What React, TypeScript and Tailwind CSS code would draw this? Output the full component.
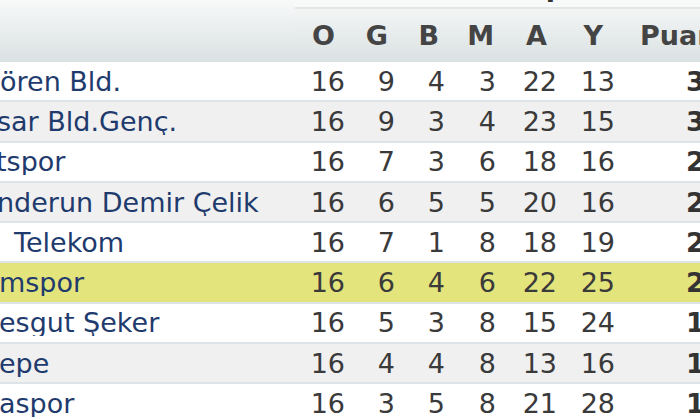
import React from 'react';

type Row = {
  name: string;
  indent: string;
  o: number;
  g: number;
  b: number;
  m: number;
  a: number;
  y: number;
  p: number;
  bg: string;
};

const rows: Row[] = [
  { name: 'ören Bld.', indent: 'ml-0', o: 16, g: 9, b: 4, m: 3, a: 22, y: 13, p: 31, bg: 'bg-white' },
  { name: 'sar Bld.Genç.', indent: '-ml-[3px]', o: 16, g: 9, b: 3, m: 4, a: 23, y: 15, p: 30, bg: 'bg-[#f0f0f0]' },
  { name: 'tspor', indent: '-ml-[4px]', o: 16, g: 7, b: 3, m: 6, a: 18, y: 16, p: 24, bg: 'bg-white' },
  { name: 'nderun Demir Çelik', indent: '-ml-[3px]', o: 16, g: 6, b: 5, m: 5, a: 20, y: 16, p: 23, bg: 'bg-[#f0f0f0]' },
  { name: 'Telekom', indent: 'ml-[14px]', o: 16, g: 7, b: 1, m: 8, a: 18, y: 19, p: 22, bg: 'bg-white' },
  { name: 'mspor', indent: '-ml-[1px]', o: 16, g: 6, b: 4, m: 6, a: 22, y: 25, p: 22, bg: 'bg-[#e4e47c]' },
  { name: 'esgut Şeker', indent: '-ml-[1px]', o: 16, g: 5, b: 3, m: 8, a: 15, y: 24, p: 18, bg: 'bg-white' },
  { name: 'epe', indent: '-ml-[1px]', o: 16, g: 4, b: 4, m: 8, a: 13, y: 16, p: 16, bg: 'bg-[#f0f0f0]' },
  { name: 'aspor', indent: '-ml-[1px]', o: 16, g: 3, b: 5, m: 8, a: 21, y: 28, p: 14, bg: 'bg-white' },
];

const font = 'font-["DejaVu_Sans",Verdana,sans-serif]';

export default function App() {
  return (
    <div className={`w-[700px] h-[420px] overflow-hidden bg-white text-[27px] ${font}`}>
      <div className="w-[900px]">
        {/* header */}
        <div className="flex h-[62px]">
          <div className="w-[295px] shrink-0 bg-gradient-to-b from-[#f8f9f9] to-[#dae1e2]" />
          <div className="flex-1 flex flex-col">
            <div className="h-[7px] shrink-0 overflow-hidden bg-[#f8f9f9] flex items-end pl-[196px]">
              <span className="leading-none font-bold text-[#333] mb-[7px]">Grup</span>
            </div>
            <div className="h-[2px] shrink-0 bg-[#e2e6e7]" />
            <div className="flex-1 flex items-center bg-gradient-to-b from-[#f3f5f5] to-[#dae1e2] font-bold text-[#444] leading-none">
              <div className="w-[50px] text-right pr-[10px]">O</div>
              <div className="w-[50px] text-right pr-[7px]">G</div>
              <div className="w-[50px] text-right pr-[6px]">B</div>
              <div className="w-[51px] text-right pr-[2px]">M</div>
              <div className="w-[61px] text-right pr-[10px]">A</div>
              <div className="w-[58px] text-right pr-[12px]">Y</div>
              <div className="pl-[25px]">Puan</div>
            </div>
          </div>
        </div>

        {/* rows */}
        {rows.map((r, i) => (
          <div key={i} className={`flex items-center h-[40.3px] border-b-2 border-[#dde3e6] ${r.bg} text-[#3a3a3a] leading-none`}>
            <div className="w-[295px] shrink-0 overflow-hidden whitespace-nowrap">
              <span className={`inline-block text-[#1f3b6d] ${r.indent}`}>{r.name}</span>
            </div>
            <div className="w-[50px] text-right">{r.o}</div>
            <div className="w-[50px] text-right">{r.g}</div>
            <div className="w-[50px] text-right">{r.b}</div>
            <div className="w-[51px] text-right">{r.m}</div>
            <div className="w-[61px] text-right">{r.a}</div>
            <div className="w-[58px] text-right">{r.y}</div>
            <div className="pl-[71px] font-bold text-[#333]">{r.p}</div>
          </div>
        ))}
      </div>
    </div>
  );
}
